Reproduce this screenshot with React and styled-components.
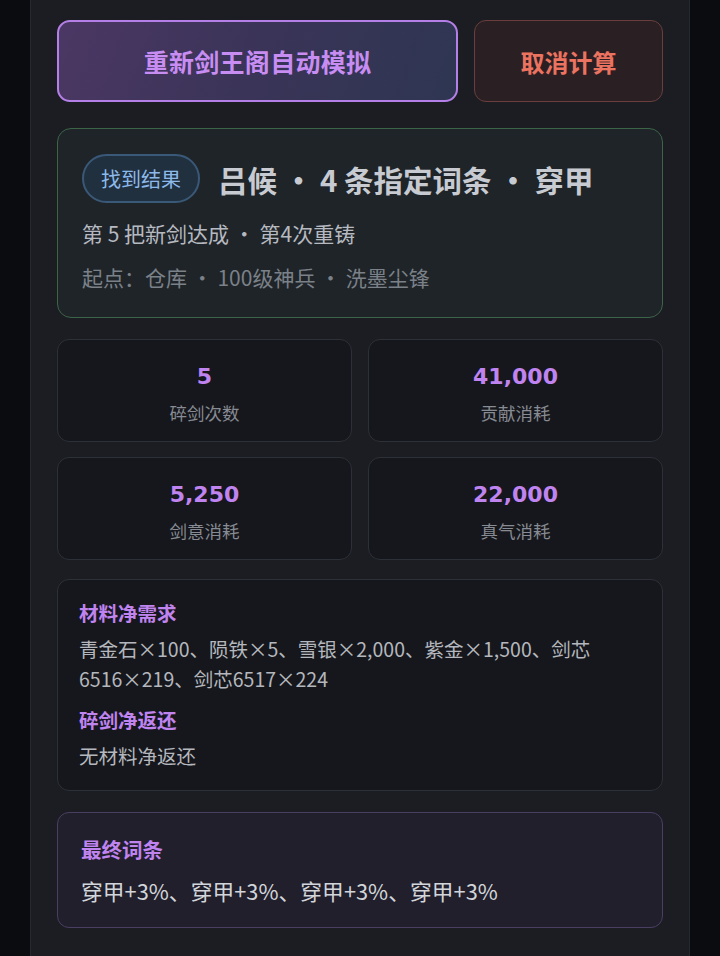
import React from "react";
import styled, { createGlobalStyle } from "styled-components";

const Global = createGlobalStyle`
  html, body { margin: 0; padding: 0; background: #0b0c0f; }
  body { font-family: "Noto Sans CJK SC", "Noto Sans", sans-serif; }
  * { box-sizing: border-box; }
`;

const Page = styled.div`
  min-height: 956px;
  background: #0b0c0f;
  padding: 0 30px;
  display: flex;
  justify-content: center;
`;

const Panel = styled.div`
  width: 660px;
  min-height: 956px;
  background: #1b1d23;
  border-left: 1px solid #26292f;
  border-right: 1px solid #26292f;
  padding: 20px 26px 28px;
  display: flex;
  flex-direction: column;
`;

const ButtonRow = styled.div`
  display: flex;
  gap: 16px;
  margin-bottom: 26px;
`;

const PrimaryButton = styled.button`
  flex: 0 0 401px;
  height: 82px;
  border-radius: 13px;
  border: 2px solid #b47fe6;
  background: linear-gradient(110deg, #4b3763 0%, #3a3458 50%, #2e3652 100%);
  color: #c88df2;
  font-family: inherit;
  font-size: 25px;
  font-weight: 700;
  letter-spacing: 0.3px;
`;

const CancelButton = styled.button`
  flex: 1;
  height: 82px;
  border-radius: 12px;
  border: 1.5px solid #6a3e3c;
  background: #2a2024;
  color: #ec735f;
  font-family: inherit;
  font-size: 24px;
  font-weight: 700;
`;

const ResultCard = styled.div`
  border: 1.5px solid #3c6447;
  background: #1f2429;
  border-radius: 14px;
  padding: 25px 24px 18px;
  display: flex;
  flex-direction: column;
  margin-bottom: 21px;
`;

const TitleRow = styled.div`
  display: flex;
  align-items: center;
  gap: 18px;
  margin-bottom: 8px;
`;

const Badge = styled.span`
  display: inline-flex;
  align-items: center;
  justify-content: center;
  height: 49px;
  padding: 0 17px;
  border-radius: 25px;
  border: 2px solid #3a5877;
  background: #20303f;
  color: #8cb9ea;
  font-size: 20px;
  line-height: 1;
`;

const Title = styled.span`
  font-size: 29.5px;
  font-weight: 700;
  color: #c7cbd1;
  white-space: pre;
`;

const Dot = styled.span`
  display: inline-block;
  width: 1em;
  text-align: center;
`;

const InfoLine = styled.div`
  font-size: 21px;
  color: ${(p) => p.$color};
  line-height: 44px;
  white-space: pre;
`;

const StatGrid = styled.div`
  display: grid;
  grid-template-columns: 1fr 1fr;
  column-gap: 16px;
  row-gap: 15px;
  margin-bottom: 19px;
`;

const StatCard = styled.div`
  height: 103px;
  background: #16171c;
  border: 1.5px solid #2d3037;
  border-radius: 12px;
  display: flex;
  flex-direction: column;
  align-items: center;
  padding-top: 20px;
`;

const StatValue = styled.div`
  font-family: "DejaVu Sans", "Noto Sans", sans-serif;
  font-size: 22px;
  font-weight: 700;
  color: #c084f0;
  line-height: 34px;
`;

const StatLabel = styled.div`
  font-size: 17.5px;
  color: #878b93;
  line-height: 38px;
`;

const InfoCard = styled.div`
  background: ${(p) => p.$bg};
  border: 1.5px solid ${(p) => p.$border};
  border-radius: 12px;
  padding: ${(p) => p.$pad};
  margin-bottom: ${(p) => p.$mb || 0}px;
  display: flex;
  flex-direction: column;
`;

const SectionHeading = styled.div`
  font-size: ${(p) => p.$size || 19.5}px;
  font-weight: 700;
  color: #c084f0;
  line-height: ${(p) => p.$lh || 30}px;
  margin-top: ${(p) => p.$mt || 0}px;
`;

const BodyText = styled.div`
  font-size: ${(p) => p.$size || 19.5}px;
  color: ${(p) => p.$color || "#b4b7bd"};
  line-height: ${(p) => p.$lh || 30}px;
  margin-top: ${(p) => p.$mt || 0}px;
`;

const stats = [
  { value: "5", label: "碎剑次数" },
  { value: "41,000", label: "贡献消耗" },
  { value: "5,250", label: "剑意消耗" },
  { value: "22,000", label: "真气消耗" },
];

export default function App() {
  return (
    <>
      <Global />
      <Page>
        <Panel>
          <ButtonRow>
            <PrimaryButton>重新剑王阁自动模拟</PrimaryButton>
            <CancelButton>取消计算</CancelButton>
          </ButtonRow>

          <ResultCard>
            <TitleRow>
              <Badge>找到结果</Badge>
              <Title>
                吕候 <Dot>·</Dot> 4 条指定词条 <Dot>·</Dot> 穿甲
              </Title>
            </TitleRow>
            <InfoLine $color="#b6bac0">
              第 5 把新剑达成 <Dot>·</Dot> 第4次重铸
            </InfoLine>
            <InfoLine $color="#7b8188">
              起点：仓库 <Dot>·</Dot> 100级神兵 <Dot>·</Dot> 洗墨尘锋
            </InfoLine>
          </ResultCard>

          <StatGrid>
            {stats.map((s) => (
              <StatCard key={s.label}>
                <StatValue>{s.value}</StatValue>
                <StatLabel>{s.label}</StatLabel>
              </StatCard>
            ))}
          </StatGrid>

          <InfoCard $bg="#16171c" $border="#2d3037" $pad="18px 21px 19px" $mb={21}>
            <SectionHeading>材料净需求</SectionHeading>
            <BodyText $mt={6}>
              青金石×100、陨铁×5、雪银×2,000、紫金×1,500、剑芯6516×219、剑芯6517×224
            </BodyText>
            <SectionHeading $mt={11}>碎剑净返还</SectionHeading>
            <BodyText $mt={6}>无材料净返还</BodyText>
          </InfoCard>

          <InfoCard $bg="#211f2b" $border="#4a3e63" $pad="20px 23px 20px">
            <SectionHeading $size={20.5} $lh={32}>最终词条</SectionHeading>
            <BodyText $size={21.8} $color="#d2d5da" $lh={32} $mt={10}>
              穿甲+3%、穿甲+3%、穿甲+3%、穿甲+3%
            </BodyText>
          </InfoCard>
        </Panel>
      </Page>
    </>
  );
}
